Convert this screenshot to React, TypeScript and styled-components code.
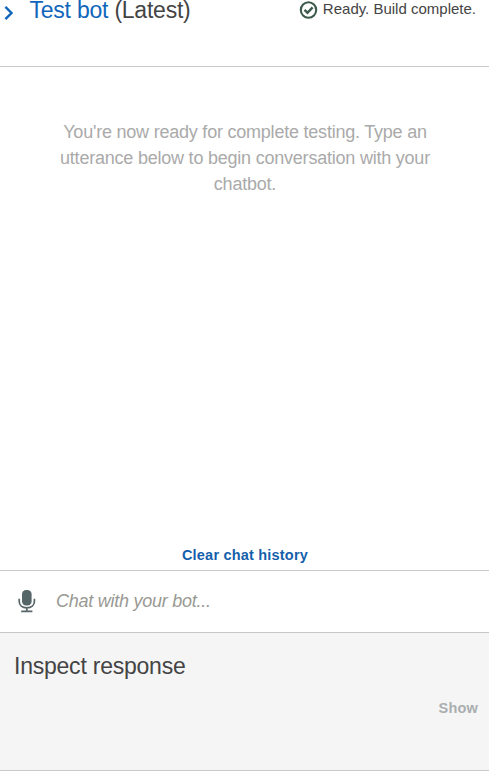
import React from "react";
import styled, { createGlobalStyle } from "styled-components";

const GlobalStyle = createGlobalStyle`
  * { box-sizing: border-box; }
  body {
    margin: 0;
    background: #fff;
    color: #444;
    font-family: "Liberation Sans", Arial, sans-serif;
    font-size: 15px;
  }
  h1, h2, p { margin: 0; font-weight: 400; }
  button {
    padding: 0;
    border: 0;
    background: none;
    font: inherit;
    cursor: pointer;
  }
`;

const Panel = styled.main`
  display: flex;
  flex-direction: column;
  height: 771px;
  overflow: hidden;
`;

const Header = styled.header`
  display: flex;
  align-items: flex-start;
  justify-content: space-between;
  height: 67px;
  padding: 0 13px 0 4px;
  border-bottom: 1px solid #c8c8c8;
`;

const TitleGroup = styled.div`
  display: flex;
`;

const Chevron = styled.svg`
  width: 10px;
  height: 15px;
  margin-top: 5px;
  margin-right: 15.5px;
`;

const Title = styled.h1`
  font-size: 23px;
  line-height: 20px;
  letter-spacing: -0.23px;
  white-space: nowrap;
`;

const BotName = styled.span`
  color: #1166bb;
`;

const Status = styled.div`
  display: flex;
  gap: 5px;
  line-height: 18px;
  white-space: nowrap;
`;

const StatusIcon = styled.svg`
  width: 19px;
  height: 19px;
`;

const Conversation = styled.section`
  display: flex;
  flex: 1;
  flex-direction: column;
  align-items: center;
  justify-content: space-between;
  padding: 52px 39px 6px 40px;
`;

const Hint = styled.p`
  width: 390px;
  color: #aaa;
  font-size: 18px;
  line-height: 26px;
  letter-spacing: -0.22px;
  text-align: center;
`;

const TextButton = styled.button<{ $muted?: boolean }>`
  color: ${({ $muted }) => ($muted ? "#aaaeb0" : "#145fac")};
  font-size: 14.5px;
  font-weight: 700;
  line-height: 18px;
  letter-spacing: 0.2px;
`;

const Composer = styled.div`
  display: flex;
  align-items: center;
  height: 63px;
  padding: 0 18px 1px;
  border-top: 1px solid #c8c8c8;
  border-bottom: 1px solid #c8c8c8;
`;

const Microphone = styled.svg`
  flex: none;
  width: 18px;
  height: 24px;
  margin-right: 20px;
`;

const ChatInput = styled.input`
  flex: 1;
  min-width: 0;
  padding: 0;
  border: 0;
  outline: 0;
  background: none;
  font: italic 18px/24px "Liberation Sans", Arial, sans-serif;
  letter-spacing: -0.25px;

  &::placeholder {
    color: #999993;
    opacity: 1;
  }
`;

const Inspector = styled.section`
  display: flex;
  flex-direction: column;
  align-items: flex-start;
  height: 138px;
  padding: 19px 11px 0 14px;
  border-bottom: 1px solid #c8c8c8;
  background: #f5f5f5;
`;

const InspectorTitle = styled.h2`
  font-size: 23px;
  line-height: 28px;
  letter-spacing: -0.23px;
`;

const InspectorActions = styled.div`
  align-self: flex-end;
  margin-top: 19px;
`;

export default function App() {
  return (
    <>
      <GlobalStyle />
      <Panel>
        <Header>
          <TitleGroup>
            <Chevron viewBox="0 0 10 15" aria-hidden="true">
              <path d="M1.4 1.8 7.5 8 1.4 14.2" fill="none" stroke="#1166bb" strokeWidth="2.4" />
            </Chevron>
            <Title>
              <BotName>Test bot</BotName> (Latest)
            </Title>
          </TitleGroup>
          <Status>
            <StatusIcon viewBox="0 0 19 19" aria-hidden="true">
              <circle cx="9.5" cy="10" r="7.7" fill="none" stroke="#3d5b4c" strokeWidth="2.1" />
              <path d="m5.5 9.8 3 3 5.1-5.4" fill="none" stroke="#3d5b4c" strokeWidth="2.4" />
            </StatusIcon>
            <span>Ready. Build complete.</span>
          </Status>
        </Header>
        <Conversation>
          <Hint>
            You're now ready for complete testing. Type an utterance below to begin
            conversation with your chatbot.
          </Hint>
          <TextButton>Clear chat history</TextButton>
        </Conversation>
        <Composer>
          <Microphone viewBox="0 0 18 24" aria-hidden="true">
            <rect x="4" y="1" width="9.6" height="15.6" rx="4.2" fill="#566568" />
            <path
              d="M1.2 9.8v2.5c0 4.1 3.2 6.5 7.6 6.5s7.6-2.4 7.6-6.5V9.8M8.8 18.8v3.4M3.2 22.4h11.2"
              fill="none"
              stroke="#566568"
              strokeWidth="1.7"
            />
          </Microphone>
          <ChatInput placeholder="Chat with your bot..." aria-label="Chat with your bot" />
        </Composer>
        <Inspector>
          <InspectorTitle>Inspect response</InspectorTitle>
          <InspectorActions>
            <TextButton $muted>Show</TextButton>
          </InspectorActions>
        </Inspector>
      </Panel>
    </>
  );
}
